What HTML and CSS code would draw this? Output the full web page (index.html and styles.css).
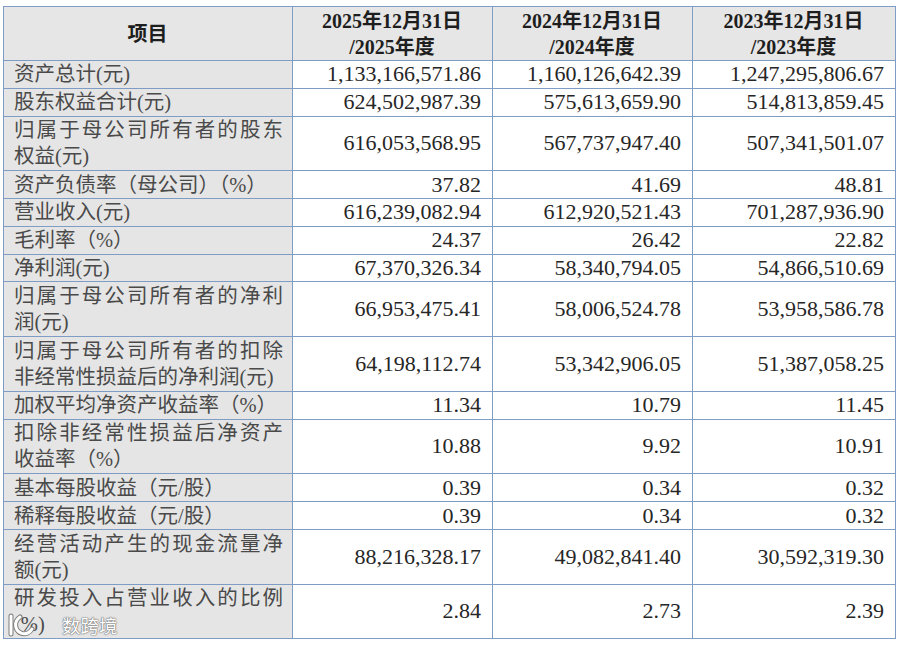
FILE: index.html
```html
<!DOCTYPE html>
<html lang="zh-CN">
<head>
<meta charset="utf-8">
<title>主要财务数据</title>
<link rel="stylesheet" href="styles.css">
</head>
<body>
<div class="page">
  <table class="fin">
    <colgroup>
      <col class="c-label">
      <col class="c-num">
      <col class="c-num">
      <col class="c-num3">
    </colgroup>
    <thead>
      <tr class="hd">
        <th class="h-label">项目</th>
        <th>2025年12月31日<br>/2025年度</th>
        <th>2024年12月31日<br>/2024年度</th>
        <th>2023年12月31日<br>/2023年度</th>
      </tr>
    </thead>
    <tbody>
      <tr class="s"><td class="lbl">资产总计(元)</td><td>1,133,166,571.86</td><td>1,160,126,642.39</td><td>1,247,295,806.67</td></tr>
      <tr class="s"><td class="lbl">股东权益合计(元)</td><td>624,502,987.39</td><td>575,613,659.90</td><td>514,813,859.45</td></tr>
      <tr class="d"><td class="lbl"><span class="l1">归属于母公司所有者的股东</span>权益(元)</td><td>616,053,568.95</td><td>567,737,947.40</td><td>507,341,501.07</td></tr>
      <tr class="s"><td class="lbl">资产负债率（母公司）（%）</td><td>37.82</td><td>41.69</td><td>48.81</td></tr>
      <tr class="s"><td class="lbl">营业收入(元)</td><td>616,239,082.94</td><td>612,920,521.43</td><td>701,287,936.90</td></tr>
      <tr class="s"><td class="lbl">毛利率（%）</td><td>24.37</td><td>26.42</td><td>22.82</td></tr>
      <tr class="s"><td class="lbl">净利润(元)</td><td>67,370,326.34</td><td>58,340,794.05</td><td>54,866,510.69</td></tr>
      <tr class="d"><td class="lbl"><span class="l1">归属于母公司所有者的净利</span>润(元)</td><td>66,953,475.41</td><td>58,006,524.78</td><td>53,958,586.78</td></tr>
      <tr class="d"><td class="lbl"><span class="l1">归属于母公司所有者的扣除</span>非经常性损益后的净利润(元)</td><td>64,198,112.74</td><td>53,342,906.05</td><td>51,387,058.25</td></tr>
      <tr class="s"><td class="lbl">加权平均净资产收益率（%）</td><td>11.34</td><td>10.79</td><td>11.45</td></tr>
      <tr class="d"><td class="lbl"><span class="l1">扣除非经常性损益后净资产</span>收益率（%）</td><td>10.88</td><td>9.92</td><td>10.91</td></tr>
      <tr class="s"><td class="lbl">基本每股收益（元/股）</td><td>0.39</td><td>0.34</td><td>0.32</td></tr>
      <tr class="s"><td class="lbl">稀释每股收益（元/股）</td><td>0.39</td><td>0.34</td><td>0.32</td></tr>
      <tr class="d"><td class="lbl"><span class="l1">经营活动产生的现金流量净</span>额(元)</td><td>88,216,328.17</td><td>49,082,841.40</td><td>30,592,319.30</td></tr>
      <tr class="d"><td class="lbl"><span class="l1">研发投入占营业收入的比例</span>(%)</td><td>2.84</td><td>2.73</td><td>2.39</td></tr>
    </tbody>
  </table>
  <div class="watermark">
    <svg class="wm-logo" width="30" height="24" viewBox="0 0 30 24" aria-hidden="true">
      <g fill="none" stroke="#7c7c7c" stroke-width="5" stroke-linecap="round">
        <path d="M5 3 V21"/>
        <path d="M14 4 C8 8 8 17 15 20 C19 22 24 20 26 16"/>
      </g>
      <g fill="none" stroke="#ffffff" stroke-width="3" stroke-linecap="round">
        <path d="M5 3 V21"/>
        <path d="M14 4 C8 8 8 17 15 20 C19 22 24 20 26 16"/>
      </g>
    </svg>
    <span class="wm-text">数跨境</span>
  </div>
</div>
</body>
</html>
```
FILE: styles.css
```css
html, body {
  margin: 0;
  padding: 0;
  background: #ffffff;
}

.page {
  position: relative;
  padding: 6px 0 0 3px;
  width: 900px;
  height: 645px;
  box-sizing: border-box;
}

.fin {
  border-collapse: collapse;
  table-layout: fixed;
  width: 892px;
  font-family: "Liberation Serif", "Noto Sans CJK SC", serif;
  color: #222222;
}

.c-label { width: 289px; }
.c-num { width: 200px; }
.c-num3 { width: 203px; }

.fin tr.hd { height: 54px; }
.fin tr.s { height: 27.8px; }
.fin tr.d { height: 54.7px; }

.fin th,
.fin td {
  border: 1px solid #7f9dc4;
  padding: 0 11px 0 10px;
  line-height: 26px;
  vertical-align: middle;
}

.fin th {
  background: #e6e6e6;
  font-weight: bold;
  font-size: 20px;
  text-align: center;
  color: #1e1e1e;
  font-family: "Liberation Serif", "Noto Sans CJK SC", serif;
}

.fin td {
  font-size: 22px;
  text-align: right;
  color: #262626;
}

.fin td.lbl {
  background: #e5e5e5;
  text-align: left;
  font-size: 20.5px;
  color: #4a4a4a;
  padding: 0 9px 0 10px;
  white-space: nowrap;
}

.l1 {
  display: block;
  text-align: justify;
  text-align-last: justify;
}

.watermark {
  position: absolute;
  left: 6px;
  top: 613px;
  display: flex;
  align-items: center;
}

.wm-logo {
  display: block;
}

.wm-text {
  font-family: "Noto Sans CJK SC", sans-serif;
  font-size: 18.5px;
  line-height: 24px;
  color: #ffffff;
  text-shadow: 0 0 1px #6a6a6a, 0 0 1px #6a6a6a, 0 0 2px #8a8a8a;
  margin-left: 26px;
}
```
